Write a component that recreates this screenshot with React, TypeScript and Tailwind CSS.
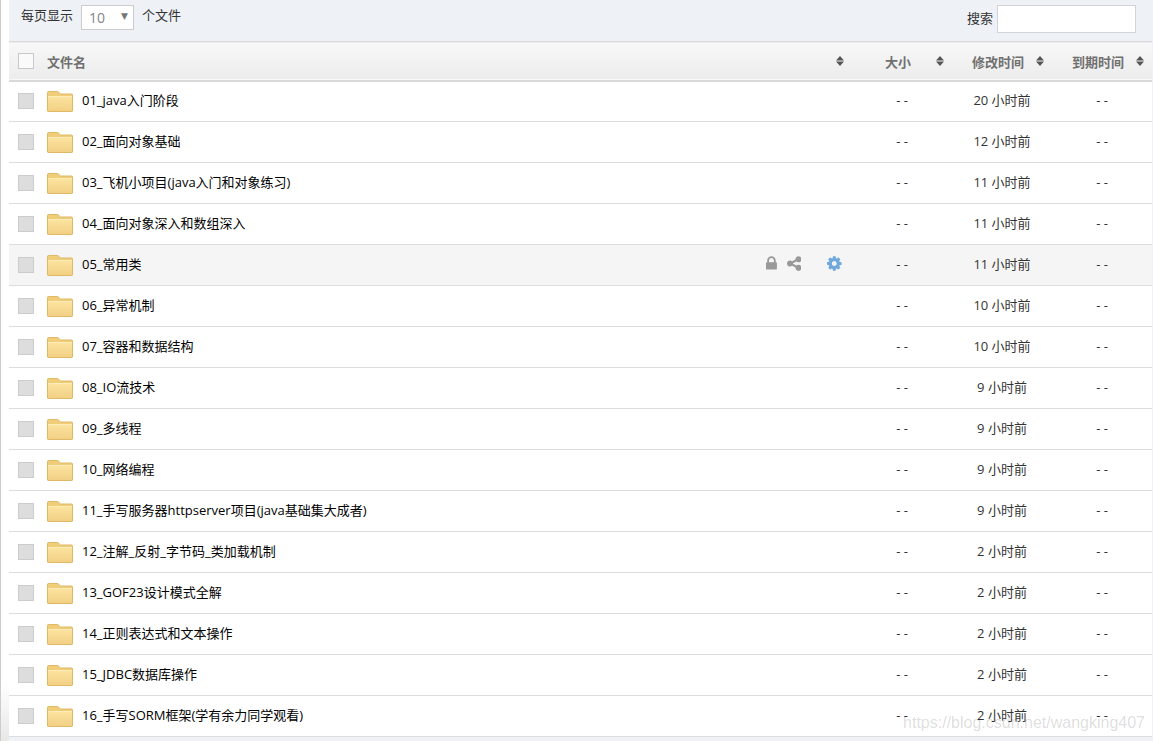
import React, { useState } from 'react';

interface FileItem {
  name: string;
  modified: string;
  active?: boolean;
}

const files: FileItem[] = [
  { name: '01_java入门阶段', modified: '20 小时前' },
  { name: '02_面向对象基础', modified: '12 小时前' },
  { name: '03_飞机小项目(java入门和对象练习)', modified: '11 小时前' },
  { name: '04_面向对象深入和数组深入', modified: '11 小时前' },
  { name: '05_常用类', modified: '11 小时前', active: true },
  { name: '06_异常机制', modified: '10 小时前' },
  { name: '07_容器和数据结构', modified: '10 小时前' },
  { name: '08_IO流技术', modified: '9 小时前' },
  { name: '09_多线程', modified: '9 小时前' },
  { name: '10_网络编程', modified: '9 小时前' },
  { name: '11_手写服务器httpserver项目(java基础集大成者)', modified: '9 小时前' },
  { name: '12_注解_反射_字节码_类加载机制', modified: '2 小时前' },
  { name: '13_GOF23设计模式全解', modified: '2 小时前' },
  { name: '14_正则表达式和文本操作', modified: '2 小时前' },
  { name: '15_JDBC数据库操作', modified: '2 小时前' },
  { name: '16_手写SORM框架(学有余力同学观看)', modified: '2 小时前' },
];

const glyphs = {
  lock: {
    width: 1152,
    d: 'M320 768h512v192q0 106 -75 181t-181 75t-181 -75t-75 -181v-192zM1152 672v-576q0 -40 -28 -68t-68 -28h-960q-40 0 -68 28t-28 68v576q0 40 28 68t68 28h32v192q0 184 132 316t316 132t316 -132t132 -316v-192h32q40 0 68 -28t28 -68z',
  },
  share: {
    width: 1536,
    d: 'M1216 512q133 0 226.5 -93.5t93.5 -226.5t-93.5 -226.5t-226.5 -93.5t-226.5 93.5t-93.5 226.5q0 12 2 34l-360 180q-92 -86 -218 -86q-133 0 -226.5 93.5t-93.5 226.5t93.5 226.5t226.5 93.5q126 0 218 -86l360 180q-2 22 -2 34q0 133 93.5 226.5t226.5 93.5t226.5 -93.5t93.5 -226.5t-93.5 -226.5t-226.5 -93.5q-126 0 -218 86l-360 -180q2 -22 2 -34t-2 -34l360 -180q92 86 218 86z',
  },
  cog: {
    width: 1536,
    d: 'M1024 640q0 -106 -75 -181t-181 -75t-181 75t-75 181t75 181t181 75t181 -75t75 -181zM1536 749v-222q0 -12 -8 -23t-20 -13l-185 -28q-19 -54 -39 -91q35 -50 107 -138q10 -12 10 -25t-9 -23q-27 -37 -99 -108t-94 -71q-12 0 -26 9l-138 108q-44 -23 -91 -38q-16 -136 -29 -186q-7 -28 -36 -28h-222q-14 0 -24.5 8.5t-11.5 21.5l-28 184q-49 16 -90 37l-141 -107q-10 -9 -25 -9q-14 0 -25 11q-126 114 -165 168q-7 10 -7 23q0 12 8 23q15 21 51 66.5t54 70.5q-27 50 -41 99l-183 27q-13 2 -21 12.5t-8 23.5v222q0 12 8 23t19 13l186 28q14 46 39 92q-40 57 -107 138q-10 12 -10 24q0 10 9 23q26 36 98.5 107.5t94.5 71.5q13 0 26 -10l138 -107q44 23 91 38q16 136 29 186q7 28 36 28h222q14 0 24.5 -8.5t11.5 -21.5l28 -184q49 -16 90 -37l142 107q9 9 24 9q13 0 25 -10q129 -119 165 -170q7 -8 7 -22q0 -12 -8 -23q-15 -21 -51 -66.5t-54 -70.5q26 -50 41 -98l183 -28q13 -2 21 -12.5t8 -23.5z',
  },
};

function Glyph({ name }: { name: keyof typeof glyphs }) {
  const { width, d } = glyphs[name];
  return (
    <svg viewBox={`0 0 ${width} 1792`} className="block h-[17px] w-auto" fill="currentColor" aria-hidden="true">
      <path transform="translate(0 1536) scale(1 -1)" fillRule="evenodd" d={d} />
    </svg>
  );
}

function FolderIcon() {
  return (
    <svg width="26" height="21" viewBox="0 0 26 21" className="shrink-0" aria-hidden="true">
      <defs>
        <linearGradient id="folder" x1="0" y1="0" x2="0" y2="1">
          <stop offset="0" stopColor="#fde4a0" />
          <stop offset="1" stopColor="#f1d084" />
        </linearGradient>
      </defs>
      <path d="M0.5 20V1.5q0-1 1-1h9.3l2.7 2.5h11q1 0 1 1V20z" fill="#f0cd78" stroke="#dfb966" />
      <path d="M1 5h24v15H1z" fill="url(#folder)" />
      <path d="M0.5 4v15.5q0 1 1 1h23q1 0 1-1V4" fill="none" stroke="#dfb966" />
      <path d="M1 5.5h24" stroke="#fdebb8" />
    </svg>
  );
}

function SortButton({ label }: { label: string }) {
  return (
    <button type="button" aria-label={label} className="text-[#555]">
      <svg width="8" height="10" viewBox="0 0 8 10" className="block" fill="currentColor" aria-hidden="true">
        <path d="M4 0L8 4.4H0zM4 10L0 5.6H8z" />
      </svg>
    </button>
  );
}

function ColumnHeader({ title }: { title: string }) {
  return (
    <th className="p-0">
      <div className="flex items-center px-2">
        <span className="flex-1 pt-0.5 text-center">{title}</span>
        <SortButton label={`${title}排序`} />
      </div>
    </th>
  );
}

function FileRow({ file }: { file: FileItem }) {
  return (
    <tr className={`h-[41px] border-b border-[#ddd] ${file.active ? 'bg-[#f5f5f5]' : 'bg-white'}`}>
      <td className="p-0">
        <div className="flex items-center pl-[9px]">
          <input
            type="checkbox"
            aria-label={file.name}
            className="size-4 shrink-0 appearance-none border border-[#ccc] bg-[#ddd] checked:bg-[#6fa8dc]"
          />
          <div className="flex flex-1 items-center gap-[9px] pl-[13px]">
            <FolderIcon />
            <a href="#" className="pb-0.5 text-black">{file.name}</a>
          </div>
          {file.active && (
            <div className="flex items-center pr-[10px] pb-1 text-[#999]">
              <button type="button" aria-label="锁定"><Glyph name="lock" /></button>
              <button type="button" aria-label="分享" className="ml-[10px]"><Glyph name="share" /></button>
              <button type="button" aria-label="设置" className="ml-[26px] text-[#6fa8dc]"><Glyph name="cog" /></button>
            </div>
          )}
        </div>
      </td>
      <td className="px-0 pt-0 pb-0.5 text-center">- -</td>
      <td className="px-0 pt-0 pb-0.5 text-center">{file.modified}</td>
      <td className="px-0 pt-0 pb-0.5 text-center">- -</td>
    </tr>
  );
}

export default function App() {
  const [query, setQuery] = useState('');
  const visible = files.filter((file) => file.name.includes(query));

  return (
    <div className="relative flex min-h-screen overflow-hidden bg-white font-['Open_Sans','Noto_Sans_CJK_SC',sans-serif] text-[13px] leading-5 text-[#333]">
      <div className="w-[9px] shrink-0 border-l border-[#ccc] bg-linear-to-b from-white from-92% to-[#e8e8e8]" />
      <main className="h-screen flex-1 overflow-hidden bg-[#eef1f6] pr-px">
        <div className="flex h-[41px] items-start justify-between pt-[5px] pr-4 pl-3">
          <div className="flex items-start gap-2">
            <label htmlFor="page-size">每页显示</label>
            <div className="relative">
              <select
                id="page-size"
                defaultValue="10"
                className="block h-[25px] w-[53px] appearance-none border border-[#ccc] bg-white pl-[7px] text-sm text-[#858585]"
              >
                <option>10</option>
                <option>25</option>
                <option>50</option>
              </select>
              <span className="pointer-events-none absolute top-px right-[6px] font-['DejaVu_Sans'] text-[9px] text-[#777]">▼</span>
            </div>
            <span>个文件</span>
          </div>
          <label className="flex items-center gap-1">
            <span className="pb-0.5">搜索</span>
            <input
              type="text"
              value={query}
              onChange={(e) => setQuery(e.target.value)}
              className="h-7 w-[139px] border border-[#d0d3d8] bg-white px-2 outline-none"
            />
          </label>
        </div>
        <table className="w-full table-fixed border-collapse">
          <colgroup>
            <col />
            <col className="w-[100px]" />
            <col className="w-[100px]" />
            <col className="w-[100px]" />
          </colgroup>
          <thead>
            <tr className="h-[39px] border-t border-b-2 border-[#d9d9d9] bg-linear-to-b from-[#f8f8f8] to-[#ececec] font-bold text-[#707070]">
              <th className="p-0">
                <div className="flex items-center pr-2 pl-[9px]">
                  <input
                    type="checkbox"
                    aria-label="全选"
                    className="size-4 shrink-0 appearance-none border border-[#c8c8c8] bg-[#fafafa] checked:bg-[#6fa8dc]"
                  />
                  <span className="flex-1 pt-0.5 pl-[13px] text-left">文件名</span>
                  <SortButton label="文件名排序" />
                </div>
              </th>
              <ColumnHeader title="大小" />
              <ColumnHeader title="修改时间" />
              <ColumnHeader title="到期时间" />
            </tr>
          </thead>
          <tbody>
            {visible.map((file) => (
              <FileRow key={file.name} file={file} />
            ))}
          </tbody>
        </table>
      </main>
      <div className="pointer-events-none absolute right-2 bottom-1.5 font-['Liberation_Sans',sans-serif] text-base leading-6 text-black/15">
        https://blog.csdn.net/wangking407
      </div>
    </div>
  );
}
